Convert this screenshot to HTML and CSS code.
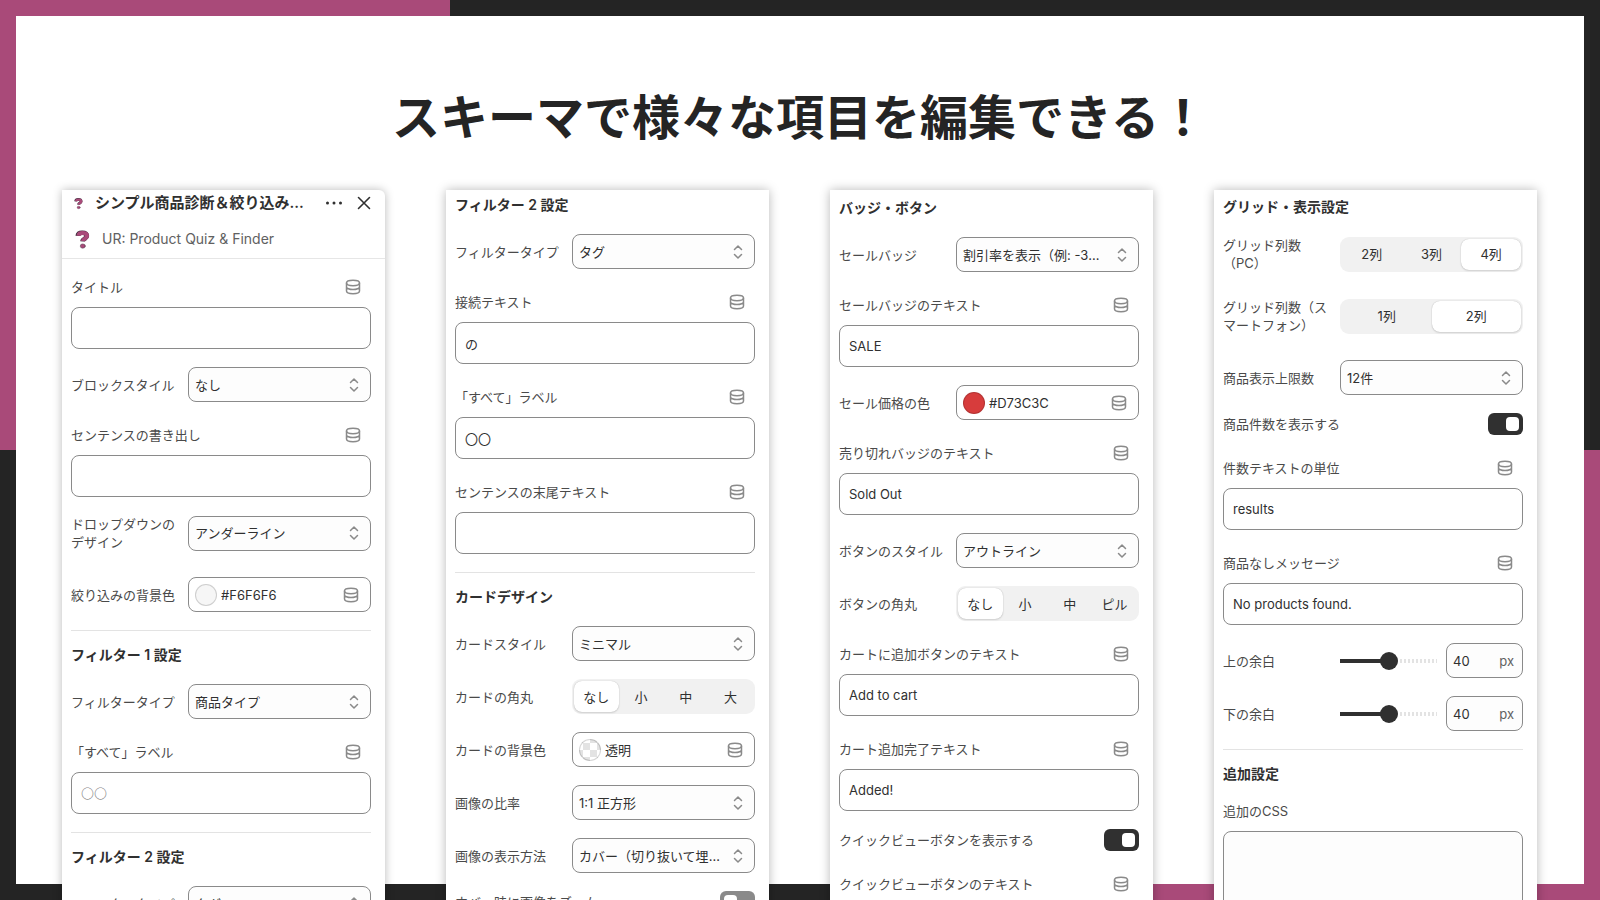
FILE: index.html
```html
<!DOCTYPE html>
<html lang="ja">
<head>
<meta charset="utf-8">
<meta name="viewport" content="width=device-width, initial-scale=1">
<title>スキーマで様々な項目を編集できる！</title>
<link rel="stylesheet" href="styles.css">
</head>
<body>
<svg class="sprite" aria-hidden="true">
  <symbol id="db" viewBox="0 0 16 16"><ellipse cx="8" cy="4" rx="6.500" ry="2.700"/><path d="M1.500 4v8c0 1.500 2.700 2.700 6.500 2.700s6.500-1.200 6.500-2.700V4M1.500 7.900c0 1.400 2.900 2.700 6.500 2.700s6.500-1.300 6.500-2.700"/></symbol>
  <symbol id="updown" viewBox="0 0 10 16"><path d="M1.500 5.500 5 2l3.500 3.500M1.500 10.500 5 14l3.500-3.500"/></symbol>
  <symbol id="question" viewBox="0 0 16 20"><path class="q-shade" d="M3 6.200C3.200 3.700 5 2.800 7.600 2.800c3.200 0 5 1.300 5 3.500 0 2.900-4.300 2.700-4.600 5.700"/><path class="q-face" d="M3.700 6C3.900 4 5.600 3.100 8 3.100c3.100 0 4.900 1.200 4.900 3.200 0 2.700-4.300 2.600-4.500 5.500"/><ellipse class="q-dot" cx="8.300" cy="17" rx="2.700" ry="2.300"/></symbol>
</svg>
<main class="slide">
  <h1 class="slide-title">スキーマで様々な項目を編集できる！</h1>
  <div class="panels">

    <section class="panel panel-app">
      <header class="app-header">
        <div class="app-bar">
          <svg class="q-small"><use href="#question"/></svg>
          <h2 class="app-title">シンプル商品診断＆絞り込み...</h2>
          <button class="bar-button" type="button" aria-label="その他"><svg viewBox="0 0 18 18" class="dots"><circle cx="2.500" cy="9" r="1.500"/><circle cx="9" cy="9" r="1.500"/><circle cx="15.500" cy="9" r="1.500"/></svg></button>
          <button class="bar-button" type="button" aria-label="閉じる"><svg viewBox="0 0 18 18" class="close"><path d="m3.500 3.500 11 11m0-11-11 11"/></svg></button>
        </div>
        <div class="app-name"><svg class="q-large"><use href="#question"/></svg><span>UR: Product Quiz &amp; Finder</span></div>
      </header>
      <div class="body">
        <div class="field"><div class="field-head"><label for="a1">タイトル</label><button type="button" class="db" aria-label="動的ソース"><svg><use href="#db"/></svg></button></div><input class="text" id="a1" type="text"></div>
        <div class="row"><label for="a2">ブロックスタイル</label><div class="select"><select id="a2"><option>なし</option></select><svg><use href="#updown"/></svg></div></div>
        <div class="field"><div class="field-head"><label for="a3">センテンスの書き出し</label><button type="button" class="db" aria-label="動的ソース"><svg><use href="#db"/></svg></button></div><input class="text" id="a3" type="text"></div>
        <div class="row tall"><label for="a4">ドロップダウンのデザイン</label><div class="select"><select id="a4"><option>アンダーライン</option></select><svg><use href="#updown"/></svg></div></div>
        <div class="row"><label for="a5">絞り込みの背景色</label><div class="color"><span class="swatch light"></span><input id="a5" type="text" value="#F6F6F6"><button type="button" class="db" aria-label="動的ソース"><svg><use href="#db"/></svg></button></div></div>
        <hr>
        <h3>フィルター 1 設定</h3>
        <div class="row"><label for="a6">フィルタータイプ</label><div class="select"><select id="a6"><option>商品タイプ</option></select><svg><use href="#updown"/></svg></div></div>
        <div class="field"><div class="field-head"><label for="a7">「すべて」ラベル</label><button type="button" class="db" aria-label="動的ソース"><svg><use href="#db"/></svg></button></div><input class="text" id="a7" type="text" placeholder="〇〇"></div>
        <hr>
        <h3>フィルター 2 設定</h3>
        <div class="row"><label for="a8">フィルタータイプ</label><div class="select"><select id="a8"><option>タグ</option></select><svg><use href="#updown"/></svg></div></div>
      </div>
    </section>

    <section class="panel panel-card">
      <div class="body">
        <h3>フィルター 2 設定</h3>
        <div class="row"><label for="b1">フィルタータイプ</label><div class="select"><select id="b1"><option>タグ</option></select><svg><use href="#updown"/></svg></div></div>
        <div class="field"><div class="field-head"><label for="b2">接続テキスト</label><button type="button" class="db" aria-label="動的ソース"><svg><use href="#db"/></svg></button></div><input class="text" id="b2" type="text" value="の"></div>
        <div class="field"><div class="field-head"><label for="b3">「すべて」ラベル</label><button type="button" class="db" aria-label="動的ソース"><svg><use href="#db"/></svg></button></div><input class="text" id="b3" type="text" value="〇〇"></div>
        <div class="field"><div class="field-head"><label for="b4">センテンスの末尾テキスト</label><button type="button" class="db" aria-label="動的ソース"><svg><use href="#db"/></svg></button></div><input class="text" id="b4" type="text"></div>
        <hr>
        <h3>カードデザイン</h3>
        <div class="row"><label for="b5">カードスタイル</label><div class="select"><select id="b5"><option>ミニマル</option></select><svg><use href="#updown"/></svg></div></div>
        <div class="row"><span id="b6">カードの角丸</span><div class="segments" role="radiogroup" aria-labelledby="b6"><label><input type="radio" name="card-radius" checked>なし</label><label><input type="radio" name="card-radius">小</label><label><input type="radio" name="card-radius">中</label><label><input type="radio" name="card-radius">大</label></div></div>
        <div class="row"><label for="b7">カードの背景色</label><div class="color"><span class="swatch clear"></span><input id="b7" type="text" value="透明"><button type="button" class="db" aria-label="動的ソース"><svg><use href="#db"/></svg></button></div></div>
        <div class="row"><label for="b8">画像の比率</label><div class="select"><select id="b8"><option>1:1 正方形</option></select><svg><use href="#updown"/></svg></div></div>
        <div class="row"><label for="b9">画像の表示方法</label><div class="select"><select id="b9"><option>カバー（切り抜いて埋める）</option></select><svg><use href="#updown"/></svg></div></div>
        <div class="toggle-row"><label for="b10">ホバー時に画像をズーム</label><input class="toggle" id="b10" type="checkbox" role="switch"></div>
      </div>
    </section>

    <section class="panel panel-badge">
      <div class="body">
        <h3>バッジ・ボタン</h3>
        <div class="row"><label for="c1">セールバッジ</label><div class="select"><select id="c1"><option>割引率を表示（例: -30%）</option></select><svg><use href="#updown"/></svg></div></div>
        <div class="field"><div class="field-head"><label for="c2">セールバッジのテキスト</label><button type="button" class="db" aria-label="動的ソース"><svg><use href="#db"/></svg></button></div><input class="text" id="c2" type="text" value="SALE"></div>
        <div class="row"><label for="c3">セール価格の色</label><div class="color"><span class="swatch red"></span><input id="c3" type="text" value="#D73C3C"><button type="button" class="db" aria-label="動的ソース"><svg><use href="#db"/></svg></button></div></div>
        <div class="field"><div class="field-head"><label for="c4">売り切れバッジのテキスト</label><button type="button" class="db" aria-label="動的ソース"><svg><use href="#db"/></svg></button></div><input class="text" id="c4" type="text" value="Sold Out"></div>
        <div class="row"><label for="c5">ボタンのスタイル</label><div class="select"><select id="c5"><option>アウトライン</option></select><svg><use href="#updown"/></svg></div></div>
        <div class="row"><span id="c6">ボタンの角丸</span><div class="segments" role="radiogroup" aria-labelledby="c6"><label><input type="radio" name="button-radius" checked>なし</label><label><input type="radio" name="button-radius">小</label><label><input type="radio" name="button-radius">中</label><label><input type="radio" name="button-radius">ピル</label></div></div>
        <div class="field"><div class="field-head"><label for="c7">カートに追加ボタンのテキスト</label><button type="button" class="db" aria-label="動的ソース"><svg><use href="#db"/></svg></button></div><input class="text" id="c7" type="text" value="Add to cart"></div>
        <div class="field"><div class="field-head"><label for="c8">カート追加完了テキスト</label><button type="button" class="db" aria-label="動的ソース"><svg><use href="#db"/></svg></button></div><input class="text" id="c8" type="text" value="Added!"></div>
        <div class="toggle-row"><label for="c9">クイックビューボタンを表示する</label><input class="toggle" id="c9" type="checkbox" role="switch" checked></div>
        <div class="field"><div class="field-head"><label for="c10">クイックビューボタンのテキスト</label><button type="button" class="db" aria-label="動的ソース"><svg><use href="#db"/></svg></button></div><input class="text" id="c10" type="text"></div>
      </div>
    </section>

    <section class="panel panel-grid">
      <div class="body">
        <h3>グリッド・表示設定</h3>
        <div class="row tall"><span id="d1">グリッド列数（PC）</span><div class="segments" role="radiogroup" aria-labelledby="d1"><label><input type="radio" name="pc-columns">2列</label><label><input type="radio" name="pc-columns">3列</label><label><input type="radio" name="pc-columns" checked>4列</label></div></div>
        <div class="row tall"><span id="d2">グリッド列数（スマートフォン）</span><div class="segments" role="radiogroup" aria-labelledby="d2"><label><input type="radio" name="sp-columns">1列</label><label><input type="radio" name="sp-columns" checked>2列</label></div></div>
        <div class="row"><label for="d3">商品表示上限数</label><div class="select"><select id="d3"><option>12件</option></select><svg><use href="#updown"/></svg></div></div>
        <div class="toggle-row"><label for="d4">商品件数を表示する</label><input class="toggle" id="d4" type="checkbox" role="switch" checked></div>
        <div class="field"><div class="field-head"><label for="d5">件数テキストの単位</label><button type="button" class="db" aria-label="動的ソース"><svg><use href="#db"/></svg></button></div><input class="text" id="d5" type="text" value="results"></div>
        <div class="field"><div class="field-head"><label for="d6">商品なしメッセージ</label><button type="button" class="db" aria-label="動的ソース"><svg><use href="#db"/></svg></button></div><input class="text" id="d6" type="text" value="No products found."></div>
        <div class="row"><label for="d7">上の余白</label><div class="range"><input id="d7" type="range" min="0" max="80" value="40"><div class="number"><input type="text" inputmode="numeric" value="40" aria-label="上の余白 (px)"><span>px</span></div></div></div>
        <div class="row"><label for="d8">下の余白</label><div class="range"><input id="d8" type="range" min="0" max="80" value="40"><div class="number"><input type="text" inputmode="numeric" value="40" aria-label="下の余白 (px)"><span>px</span></div></div></div>
        <hr>
        <h3 class="compact">追加設定</h3>
        <div class="field"><div class="field-head"><label for="d9">追加のCSS</label></div><textarea class="text css" id="d9"></textarea></div>
      </div>
    </section>

  </div>
</main>
</body>
</html>
```

FILE: styles.css
```css
* { box-sizing: border-box; }

body {
  margin: 0;
  font: 13px/18px Inter, "Noto Sans CJK JP", sans-serif;
  color: #303030;
}

button, input, select, textarea { font: inherit; color: inherit; margin: 0; }
button { border: 0; padding: 0; background: none; cursor: pointer; }
svg { display: block; fill: none; stroke: currentColor; stroke-linecap: round; stroke-linejoin: round; }
.sprite { display: none; }

/* Slide frame: dark border with two pink corners */
.slide {
  height: 100vh;
  overflow: hidden;
  padding: 78px 63px 0 62px;
  background:
    linear-gradient(#fff, #fff) center / calc(100% - 32px) calc(100% - 32px) no-repeat,
    linear-gradient(#a94a79, #a94a79) left top / 50vh 50vh no-repeat,
    linear-gradient(#a94a79, #a94a79) right bottom / 50vh 50vh no-repeat,
    #242424;
}
.slide-title {
  margin: 0 0 40px;
  font: bold 48px/72px "Noto Sans CJK JP", sans-serif;
  color: #242424;
  text-align: center;
}
.panels {
  display: grid;
  grid-template-columns: repeat(4, minmax(0, 1fr));
  gap: 61px;
  height: 100%;
}
.panel { background: #fff; box-shadow: 0 0 10px rgba(0, 0, 0, .28); }
.panel-app { border-radius: 0 6px 0 0; }
.body { padding: 0 14px 0 9px; }
.panel-app .body { padding-top: 13px; }
.panel-card .body { padding-top: 5px; }
.panel-badge .body { padding-top: 8px; }
.panel-grid .body { padding-top: 7px; }

/* App header */
.app-header { border-bottom: 1px solid #e6e6e6; }
.app-bar { display: flex; align-items: center; height: 26px; padding: 0 12px 0 12px; }
.app-title { flex: 1; margin: 0 0 0 12px; font-size: 15px; line-height: 22px; font-weight: 600; white-space: nowrap; }
.bar-button { margin-left: 12px; color: #303030; }
.bar-button svg { width: 18px; height: 18px; }
.dots { fill: currentColor; stroke: none; }
.close { stroke-width: 1.6; }
.app-name { display: flex; align-items: center; gap: 12px; height: 42px; padding: 4px 12px 0 13px; font-size: 14px; color: #616161; }
.q-small { width: 9px; height: 13px; }
.q-large { width: 15px; height: 19px; }
.q-shade { stroke: #3f2b3c; stroke-width: 5; stroke-linecap: butt; }
.q-face { stroke: #a94a79; stroke-width: 4.2; stroke-linecap: butt; }
.q-dot { fill: #a94a79; stroke: #3f2b3c; stroke-width: .5; }

/* Sections */
h3 { margin: 0; padding-bottom: 19px; font-size: 14px; line-height: 20px; font-weight: 600; }
hr { height: 1px; margin: 0; border: 0; background: #e3e3e3; }
hr + h3 { padding-top: 14px; }
h3.compact { padding-bottom: 12px; }

/* Label beside its control */
.row { display: grid; grid-template-columns: 105px minmax(0, 1fr); gap: 12px; align-items: center; height: 35px; margin-bottom: 18px; color: #4a4a4a; }
.row.tall { margin-bottom: 27px; }
.toggle-row { display: flex; align-items: center; justify-content: space-between; height: 22px; margin-bottom: 18px; color: #4a4a4a; }

/* Label above its control */
.field { margin-bottom: 18px; color: #4a4a4a; }
.field-head { display: flex; align-items: center; justify-content: space-between; height: 29px; margin-bottom: 6px; padding-right: 10px; }
.db { color: #8a8a8a; }
.db svg { width: 16px; height: 16px; stroke-width: 1.500; }
.text { display: block; width: 100%; height: 42px; padding: 0 9px; border: 1px solid #8a8a8a; border-radius: 8px; background: #fff; color: #303030; }
.text::placeholder { color: #8a8a8a; font-weight: 300; opacity: 1; }
.css { height: 110px; background: #fdfdfd; resize: none; }

.select { display: grid; grid-template-columns: minmax(0, 1fr) 22px; align-items: center; color: #303030; }
.select select { grid-area: 1 / 1 / 2 / 3; width: 100%; height: 35px; padding: 0 33px 0 6px; border: 1px solid #8a8a8a; border-radius: 8px; background: #fdfdfd; appearance: none; overflow: hidden; text-overflow: ellipsis; white-space: nowrap; }
.select svg { grid-area: 1 / 2; width: 10px; height: 16px; color: #8a8a8a; stroke-width: 1.500; pointer-events: none; z-index: 1; }

.color { display: flex; align-items: center; gap: 4px; height: 35px; padding: 0 11px 0 6px; border: 1px solid #8a8a8a; border-radius: 8px; color: #303030; }
.color input { flex: 1; min-width: 0; padding: 0; border: 0; background: none; }
.swatch { width: 22px; height: 22px; border: 1px solid rgba(0, 0, 0, .16); border-radius: 50%; }
.light { background: #f6f6f6; }
.red { background: #d73c3c; }
.clear { background: repeating-conic-gradient(#fff 0 25%, #e3e3e3 0 50%) center / 14px 14px; }

.segments { display: flex; height: 35px; padding: 2px; border-radius: 9px; background: #f1f1f1; color: #303030; }
.segments label { flex: 1 1 0; display: flex; align-items: center; justify-content: center; border-radius: 8px; cursor: pointer; }
.segments label:has(:checked) { background: #fff; box-shadow: 0 0 1px rgba(0, 0, 0, .25), 0 1px 2px rgba(0, 0, 0, .12); }
.segments input { appearance: none; width: 0; height: 0; }

.toggle { appearance: none; display: flex; align-items: center; width: 35px; height: 22px; padding: 0 4px; border-radius: 6px; background: #8a8a8a; }
.toggle::before { content: ""; width: 13px; height: 14px; border-radius: 4px; background: #fff; }
.toggle:checked { justify-content: flex-end; background: #303030; }

.range { display: grid; grid-template-columns: minmax(0, 1fr) 77px; gap: 9px; align-items: center; }
.range > input {
  appearance: none;
  width: 100%;
  height: 18px;
  background:
    linear-gradient(#303030, #303030) left center / 50% 4px no-repeat,
    repeating-linear-gradient(to left, #e3e3e3 0 2px, #fff 2px 4px) right center / 50% 4px no-repeat;
}
.range > input::-webkit-slider-thumb { appearance: none; width: 18px; height: 18px; border-radius: 50%; background: #303030; }
.number { display: flex; align-items: center; height: 35px; padding: 0 8px 0 6px; border: 1px solid #8a8a8a; border-radius: 8px; background: #fdfdfd; color: #303030; }
.number input { flex: 1; min-width: 0; padding: 0; border: 0; background: none; }
.number span { color: #616161; }
```
